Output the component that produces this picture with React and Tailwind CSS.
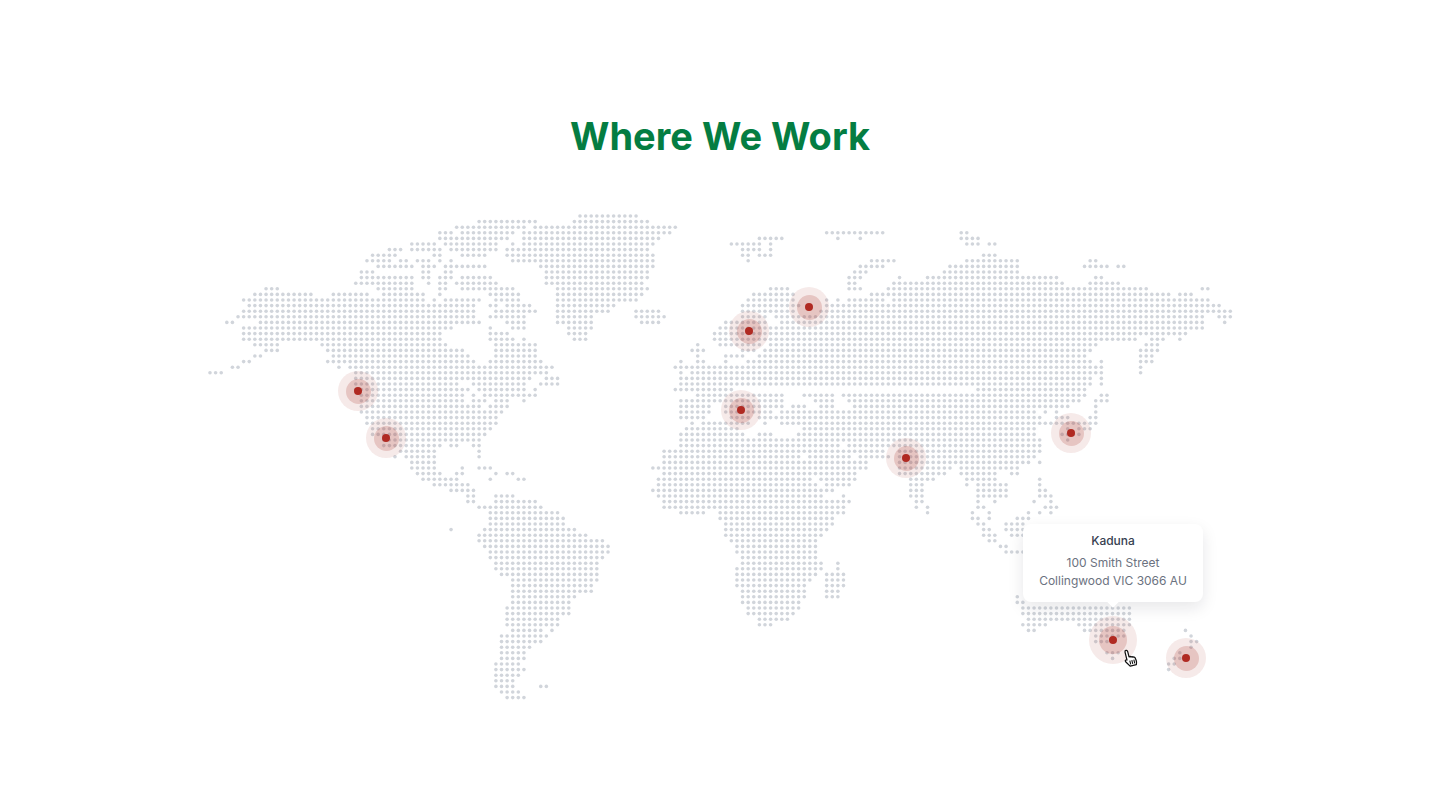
import React from "react";

const P = 5.606, X0 = 210, Y0 = 216;

const PANELS = [
  [200, 205, `68:765-780|85:715-750|102:715-780|118:630-700,730-780|135:565-600,630-715,750-780|152:515-580,700-715|169:497-565,600-615,650-680,715,750|185:530-630,665-700,735-780|202:480-515,665-680,735-750|219:480-630,665-680,715-750|236:465-630,680,715-730,765-780|252:195-230,530-630,715-730|269:160-330,395-500,545-665,715|286:125-665,700,730-780|302:145-780|319:125-780|336:110-780|352:75-92,180-780|369:125-750|386:125-715|403:125-715|420:160-230,365-735|436:195-230,380-780|453:160-180,395-780|470:125-145,395-780|486:92-110,412,445-780|503:30-64,460-780`],
  [460, 205, `33:365-525|50:50-225,350-560|68:0-190,230-545,570-640|85:0-155,200-625|102:0,30-140,185-590|118:0,30-105,165,200-575|135:15-105,135-560|152:0-70,135-575|169:150-575|185:0-70,250-575|202:265-560|219:0-90,265-560|236:0-105,265-545|252:0-155,285-560|269:85-170,285-545|286:15-55,115-170,300-525|302:0-40,85-105,135-205,285-460|319:0-40,115-220,285-440,535-550,570-590|336:0-40,85-170,200,300-390,535-605|352:15-55,135-190,300-390,550-590|369:85,150-190,318-390|386:85-140,318-375,770|403:85-155,185,350-375,770|420:100-225,705|436:100-225,690-725|453:0-20,100-225,705|470:0-40,85-240,670,705-725|486:0-40,85-275,650-690,705-740,770-780|503:0-255,655,690-725,755-780`],
  [720, 225, `25:325-380,410-430,460-495,725-745|42:125-180,360,427,725-780|59:40-110,145-160,745-780|75:60,92-110,145|92:75-92,125-160|109:92,460-530,745-780|126:425-480,695-780|143:410-445,680-780|159:392-425,545,630-780|176:392-410,525-780|193:160-195,392-425,510-780|210:108-225,460-480,510-780|226:92-225,325,360,392-495,525-780|243:75-230,325-780|260:60-215,310-780|276:60-130,175-780|293:25-140,190-780|310:5-780|326:5-125,140-780|343:5-780|360:5-125,160-780|377:60-95,140-780|393:25-45,75,125-780|410:25,92-780|426:5-780|443:5-780|460:5-780|477:5-780`],
  [980, 225, `42:0|59:0,30-50|92:15-50|109:0-120,330-350|126:0-120,315-385,415-435|143:0-105|159:0-235,350-370|176:0-250,335-420|193:0-505,665-685|210:0-570,600-640|226:0-690|243:0-720|260:0-755|276:0-670,720-755|293:0-670,735|310:0-670|326:0-620|343:0-470,515-550,600|360:0-350,500-535|377:0-335,485-535|393:0-320,485-520|410:0-335,365,485-520|426:0-370,485|443:0-370,485|460:0-335,365|477:0-335,365|493:0-320|507:0-320,365-385`],
  [650, 390, `15:150-400,470-555,585-780|32:100-390,500-555,600-780|48:85-170,230-390,435-455,520-555,620-780|65:85-170,230-355,400-590,620-780|82:85-155,240-300,335-355,385-590,620-780|99:120,165-300,350,400-780|115:115-255,465-780|132:100-270,335-355,450-780|149:85-305,335-780|165:85-570,600-780|182:50-575,600-700|199:50-440,480-590,630-720|215:35-460,480-640|232:15-475,500-655|249:35-475,500-620|265:30-475,515-620|282:30-490,530-590|299:15-505,535-555|316:30-520,585|332:50-520,535-590|349:50-575|366:85-155,215-575|382:215-555|399:232-540|416:232-525|433:232-505|449:250-490|466:265-490|483:265-490|500:285-490`],
  [730, 530, `13:0-270|30:10-250|45:25-250|62:25-250|80:45-250|97:45-270,330|113:28-270,330|130:28-250,295-335|147:28-235,295-335|163:28-220,295-335|180:45-220,295-320|197:45-220,295-320|213:45-205|230:60-200|247:60-185|264:80-165|281:80-115`],
  [900, 390, `15:0-560,605-625|32:0-545,590-625|48:0-495,590|65:0-405,440,475,590|82:0-420,475-495,575-590|99:0-440,460-590|115:0-410,510,540,560-575|132:0-410,490-540|149:0-425,510|165:0-425|182:0-425|199:0-410|215:0-390,425|232:0-155,190-355|249:0-125,190-290,335-355|265:35-105,205-290,425|282:35-70,205,240-310,425|299:35-70,240-325,425-440|316:35-70,240-255,275-325,425-455|332:50-70,240,290,405,455|349:55,88,240-255,440-475|366:88,222,270,390,425,455|382:222-240,270,355-390|399:240-255,320-370|416:255-270,320-370|433:255-290,340-370|449:270-290|466:305-325|483:320-370`],
  [330, 360, `4:0-430,475-630|21:25,55-665|38:75-650|55:75-600,655-680|72:75-380,425-580,625-680|88:75-410,440-580,610|105:90-395,425,460-610|122:90-395,425-460,495-530,575|139:90-445,475-530|155:90-510|172:105-495|189:105-495|206:125-480|223:125-460|239:155-445|256:155-330,355-380,425-445|273:205-310,445|289:190,225-310,445|306:240-310|323:240-310,395,445-475|340:255-330,375-395,495,525-545|356:275-380,475,560-575|373:310-410|390:360-425|406:410-430,495-545|423:425,495-610|440:445-630|457:475-680|474:475-695|490:475-695|507:360,460-730|524:445-765|540:445-780`],
  [470, 490, `0:0|16:0,70-125|32:0,70-190|49:20-205|66:55-260|83:55-275|100:55-275|116:40-310|133:20-345|150:20-395|167:40-410|183:55-410|200:55-395|217:70-375|233:70-375|250:90-375|267:120-375|283:120-360|300:120-360|317:120-310|334:120-295|350:105-295|367:105-295|384:105-260|400:105-260|417:120-210,240|434:90-225|450:90-210|467:90-175|484:90-160|500:90-160|517:70-140|534:70-160|550:70-140|567:70-125|584:70-125,205-225|601:90-140|617:105-160`],
  [1010, 520, `8:8-40|25:8-30|42:8-30|92:8-30|226:25|243:25-40|260:40-365|276:40-365|293:58-365|310:42-110,205-365|327:58-78,225-345,528|343:260-345,545|360:260-300,545-562|378:545|395:295-330,510|411:310,495-510|428:478-495|445:478`],
  [0, 0, `378:680-730|384:680-730|389:678-730`],
];

function buildDots() {
  const seen = new Set();
  const dots = [];
  for (const [zx, zy, text] of PANELS) {
    const scale = zx === 0 ? 1 : 3;
    for (const row of text.split("|")) {
      const [yy, spans] = row.split(":");
      const r = Math.round((zy + Number(yy) / scale - Y0) / 5.6);
      for (const span of spans.split(",")) {
        const [a, b = a] = span.split("-").map(Number);
        const c1 = Math.round((zx + a / scale - X0) / P);
        const c2 = Math.round((zx + b / scale - X0) / P);
        for (let c = c1; c <= c2; c++) {
          const key = r + ":" + c;
          if (!seen.has(key)) {
            seen.add(key);
            dots.push([X0 + c * P, Y0 + r * 5.6]);
          }
        }
      }
    }
  }
  return dots;
}

const DOTS = buildDots();

const PINS = [
  [358, 391],
  [386, 438],
  [749, 331],
  [809, 307],
  [741, 410],
  [906, 458],
  [1071, 433],
  [1186, 658],
];

function Pin({ x, y, large }) {
  return (
    <div
      className={`absolute -translate-x-1/2 -translate-y-1/2 rounded-full bg-[#a8322a]/10 flex items-center justify-center ${large ? "w-[48px] h-[48px]" : "w-[40px] h-[40px]"}`}
      style={{ left: x - 200, top: y - 205 }}
    >
      <div className={`rounded-full bg-[#a8322a]/20 flex items-center justify-center ${large ? "w-[28px] h-[28px]" : "w-[25px] h-[25px]"}`}>
        <div className="w-[8px] h-[8px] rounded-full bg-[#b02a22]" />
      </div>
    </div>
  );
}

export default function App() {
  return (
    <div className="w-full h-[807px] bg-white overflow-hidden font-[family-name:Inter,sans-serif]">
      <h1 className="pt-[114px] text-center text-[38px] leading-[44px] font-bold text-[#047d42]">
        Where We Work
      </h1>
      <div className="relative mx-auto mt-[47px] w-[1040px] h-[500px]">
        <svg viewBox="200 205 1040 500" className="w-full h-full block">
          {DOTS.map(([x, y], i) => (
            <circle key={i} cx={x} cy={y} r="1.8" fill="#d1d5db" />
          ))}
        </svg>
        {PINS.map(([x, y]) => (
          <Pin key={x} x={x} y={y} />
        ))}
        <Pin x={1113} y={640} large />
        <div className="absolute left-[823px] top-[319px] w-[180px] h-[78px] rounded-lg bg-white shadow-[0_6px_16px_rgba(17,24,39,0.1)] flex flex-col items-center pt-[8px]">
          <div className="text-[12px] leading-[18px] font-medium text-[#374151]">Kaduna</div>
          <div className="mt-[4px] text-[12px] leading-[18px] text-[#6b7280] text-center">
            <div>100 Smith Street</div>
            <div>Collingwood VIC 3066 AU</div>
          </div>
          <div className="absolute left-1/2 -bottom-[4px] -ml-[4px] w-[8px] h-[8px] rotate-45 bg-white" />
        </div>
        <svg viewBox="0 0 24 24" className="absolute left-[920px] top-[443px] w-[20px] h-[20px] -rotate-[14deg]">
          <path
            d="M9.500 2c1 0 1.700.8 1.700 1.800V10.500c1-.4 2-.1 2.400.7.900-.3 1.800 0 2.200.8 1-.3 2 .2 2.200 1.200l.5 3.500c.2 1.800-.2 3.300-1 4.800H9.800L6 15.500c-.6-.9-.5-1.700.1-2.200.6-.4 1.300-.3 1.800.2V3.800C7.900 2.800 8.500 2 9.500 2z"
            fill="#fff"
            stroke="#111"
            strokeWidth="1.500"
            strokeLinejoin="round"
          />
          <path d="M11 15v4.500M13.500 15v4.500M16 15v4.500" stroke="#111" strokeWidth="1.300" fill="none" />
        </svg>
      </div>
    </div>
  );
}
